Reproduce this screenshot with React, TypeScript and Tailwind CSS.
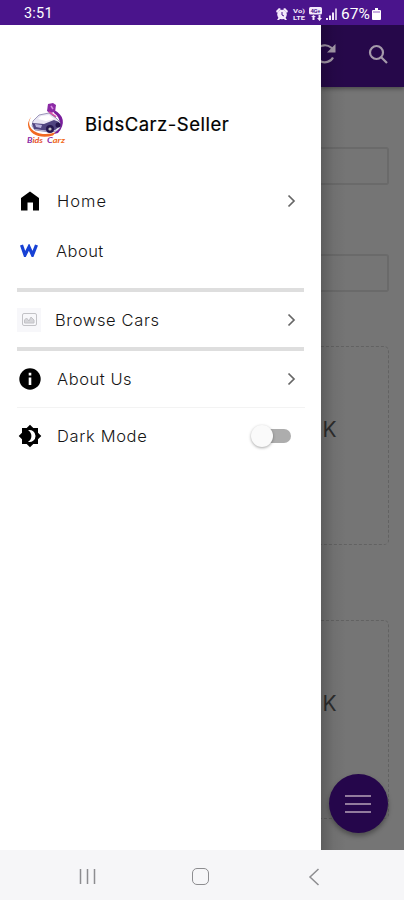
import React from "react";

const label = "font-[Inter,'Open_Sans',sans-serif] font-light text-[#151515] whitespace-nowrap leading-6 text-[16.5px]";

function Chevron() {
  return (
    <svg className="ml-auto mr-[8px] shrink-0" width="10" height="14" viewBox="0 0 10 14" fill="none" stroke="#666" strokeWidth="1.7">
      <path d="M1.5 1.5 7 7l-5.5 5.5" />
    </svg>
  );
}

function Logo() {
  return (
    <svg width="42" height="44" viewBox="0 0 42 44" className="shrink-0">
      <path d="M6 14C0 21 4 29 14 31.500q9 1.500 16-1.500l-3 3.500C15 37 3 33 2 23q0-5 4-9Z" fill="#f26a21" />
      <path d="M28 8c10 5 12 14 4 23l-4 1c7-8 8-15 0-21Z" fill="#7a1d9c" />
      <path d="M22 2l5-1 3 2-1 7-5 1-3-2Z" fill="#8b2aa5" />
      <path d="m25 4 2 3" stroke="#d78be0" strokeWidth="1.500" />
      <path d="m23 10 7 5" stroke="#dd4ba5" strokeWidth="2" />
      <path d="m7 19 6-6 10-2 7 5 4 4v6l-3 3-8 1-14-2-3-4Z" fill="#e9e6f3" stroke="#77719f" strokeWidth=".7" />
      <path d="m12 17 3-3 8-1 5 4-8 2Z" fill="#fff" />
      <path d="m6 21 12 1 10-4 5 2v5l-4 3-6 1-15-2Z" fill="#504580" />
      <path d="m9 22 7 1-1 3-5-1Z" fill="#b9b2dc" />
      <circle cx="24" cy="27" r="4" fill="#24164e" />
      <circle cx="24" cy="27" r="1.6" fill="#bbb" />
      <circle cx="32" cy="23" r="2.5" fill="#24164e" />
      <text x="1" y="41" textLength="16" lengthAdjust="spacingAndGlyphs" fontFamily="Lato" fontSize="8" fontWeight="700" fontStyle="italic" fill="#e8552c"><tspan fill="#8b2aa5">B</tspan>ids</text>
      <text x="21" y="41" textLength="18" lengthAdjust="spacingAndGlyphs" fontFamily="Lato" fontSize="8" fontWeight="700" fontStyle="italic" fill="#f26a21"><tspan fill="#8b2aa5">C</tspan>arz</text>
    </svg>
  );
}

function StatusBar() {
  return (
    <header className="flex h-[24.5px] shrink-0 items-center bg-[#4a148c] pl-6 pr-[22px] pt-[3px] font-[Roboto,sans-serif] text-white">
      <span className="w-[30px] text-[14.5px] leading-5 tracking-[0.2px]">3:51</span>
      <svg className="ml-auto mr-[3px]" width="62" height="16" viewBox="0 0 62 16">
        <g fill="#f4e9fb">
          <circle cx="6" cy="8.5" r="4.8" />
          <path d="m0 5 3-3 2 1-4 4ZM12 5 9 2 7 3l4 4ZM1 14l2-3 2 1-2 2ZM11 14l-2-3-2 1 2 2Z" />
          <text x="17" y="7" fontFamily="Roboto" fontSize="5.8" fontWeight="700" textLength="12" lengthAdjust="spacingAndGlyphs">Vo)</text>
          <text x="17" y="14.2" fontFamily="Roboto" fontSize="5.8" fontWeight="700" textLength="12" lengthAdjust="spacingAndGlyphs">LTE</text>
          <rect x="33" y="1" width="13" height="7.5" rx="1.5" />
          <path d="m35 11 2.5-2 2.5 2h-1.500v3h-2v-3ZM41 12h1.500V9h2v3H46l-2.500 3Z" />
          <path d="M50 12h2v2h-2ZM53 9.500h2V14h-2ZM56 6.500h2V14h-2Z" />
          <path d="M59 2.500h2V14h-2Z" opacity=".75" />
        </g>
        <path d="M6 6v3l2 1" fill="none" stroke="#4a148c" />
        <text x="34.5" y="7" fontFamily="Roboto" fontSize="6" fontWeight="700" textLength="10" fill="#4a148c">4G+</text>
      </svg>
      <span className="text-[15.5px] leading-5 tracking-[0.1px]">67%</span>
      <svg className="ml-[2px] mr-px" width="9" height="12" viewBox="0 0 9 12"><path d="M3 0h3v2h2q1 0 1 1v8q0 1-1 1H1q-1 0-1-1V3q0-1 1-1h2Z" fill="#fff" /><path d="M1 3h7v2H1Z" fill="#c8aee0" /></svg>
    </header>
  );
}

function Drawer() {
  return (
    <aside className="flex w-[320.5px] shrink-0 flex-col bg-white pl-[17px] pr-4">
      <div className="mt-[76px] flex h-[46px] items-center pl-[9px]">
        <Logo />
        <h1 className="ml-[17px] whitespace-nowrap font-[Inter,'Open_Sans',sans-serif] text-[18.5px] font-normal leading-6 tracking-[0.5px] text-black [-webkit-text-stroke:0.2px_black]">BidsCarz-Seller</h1>
      </div>
      <nav className="flex flex-col">
        <a className="mt-[29px] flex h-[50px] items-center">
          <svg width="24" height="24" viewBox="0 0 24 24" className="ml-px"><path d="M3 9 12 2.500 21 9v12.500h-6v-8H9.500v8H3Z" fill="#000" /></svg>
          <span className={`${label} ml-[15px] tracking-[1px]`}>Home</span>
          <Chevron />
        </a>
        <a className="flex h-[50px] items-center">
          <svg width="18" height="13" viewBox="0 0 18 13" className="ml-[3px]"><path d="M1.5 1 5 11 9 3l3.500 8L16.500 1" fill="none" stroke="#1741d5" strokeWidth="3.200" /></svg>
          <span className={`${label} ml-[18px] tracking-[0.45px]`}>About</span>
        </a>
        <hr className="mt-[12px] h-[4px] w-[287px] border-0 bg-[#dedede]" />
        <a className="flex h-[55px] items-center pt-px">
          <span className="flex size-[24px] items-center justify-center bg-[#f7f7fa]">
            <svg width="15" height="13" viewBox="0 0 15 13" fill="none" stroke="#c2c2c6"><rect x=".5" y=".5" width="14" height="12" rx="1.5" /><path d="M2.5 10V7l2-2 2.5 3 2-4 3 3v3Z" fill="#d5d5d9" /></svg>
          </span>
          <span className={`${label} ml-[14px] tracking-[0.65px]`}>Browse Cars</span>
          <Chevron />
        </a>
        <hr className="h-[4px] w-[287px] border-0 bg-[#dedede]" />
        <a className="flex h-[57px] items-center border-b border-[#f3f3f3]">
          <svg width="24" height="24" viewBox="0 0 24 24" className="ml-px"><circle cx="12" cy="12" r="10.7" /><path d="M10.700 5.800h2.600v2.700h-2.600ZM10.700 10.500h2.600V18h-2.600Z" fill="#fff" /></svg>
          <span className={`${label} ml-[15px] tracking-[0.55px]`}>About Us</span>
          <Chevron />
        </a>
        <div className="flex h-[56px] items-center">
          <svg width="24" height="24" viewBox="0 0 24 24" className="ml-px"><path d="M20 8.700V4h-4.700L12 .700 8.700 4H4v4.700L.700 12 4 15.300V20h4.700l3.300 3.300 3.300-3.300H20v-4.700l3.300-3.300Z" /><path d="M10 6.200a6 6 0 1 1 0 11.600c2.200-1.300 3.400-3.200 3.400-5.800S12.200 7.500 10 6.200Z" fill="#fff" /></svg>
          <span className={`${label} ml-[15px] tracking-[0.65px]`}>Dark Mode</span>
          <span className="ml-auto mr-[14px] flex h-[14px] w-[36px] items-center rounded-full bg-[#adadad]">
            <span className="-ml-[4px] size-[22px] shrink-0 rounded-full bg-[#fafafa] shadow-[0_1px_3px_rgba(0,0,0,0.35)]" />
          </span>
        </div>
      </nav>
    </aside>
  );
}

function DimmedPage() {
  return (
    <main className="relative flex min-w-0 grow flex-col overflow-hidden bg-[#757575]">
      <div className="z-10 flex h-[62.500px] shrink-0 items-center justify-between bg-[#26084a] pr-[15px] pb-[3px] shadow-[0_2px_4px_rgba(0,0,0,0.35)]">
        <svg width="16" height="22" viewBox="8 1 16 22" fill="none" stroke="#a59aaa" strokeWidth="2.2"><path d="M20 15.500a9 8.500 0 1 1-2-10l3 2.500" /><path d="M22.500 2v8.500H14Z" fill="#a59aaa" stroke="none" /></svg>
        <svg width="21" height="21" viewBox="0 0 21 21" fill="none" stroke="#a59aaa" strokeWidth="2.2"><circle cx="8.500" cy="8.500" r="6.500" /><path d="m13 13 6 6" /></svg>
      </div>
      <div className="mt-[60px] h-[38px] w-[68px] shrink-0 rounded-r-[3px] border-2 border-l-0 border-[#6a6a6a]" />
      <div className="mt-[69px] h-[38px] w-[68px] shrink-0 rounded-r-[3px] border-2 border-l-0 border-[#6a6a6a]" />
      <div className="mt-[54px] flex h-[199px] w-[68px] shrink-0 items-start rounded-r-[5px] border border-l-0 border-dashed border-[#626262] pl-[2px] pt-[71px] font-[Inter,sans-serif] text-[21px] leading-6 text-[#2d2d2d]">K</div>
      <div className="mt-[75px] flex h-[199px] w-[68px] shrink-0 items-start rounded-r-[5px] border border-l-0 border-dashed border-[#626262] pl-[2px] pt-[71px] font-[Inter,sans-serif] text-[21px] leading-6 text-[#2d2d2d]">K</div>
      <div className="pointer-events-none absolute inset-0 z-20 bg-linear-to-r from-black/20 via-black/5 via-15% to-transparent to-30%" />
      <button className="absolute bottom-[17px] right-[16px] z-30 flex size-[59px] flex-col items-center justify-center gap-[6px] rounded-full bg-[#25064b] pr-[2px] shadow-[0_3px_5px_rgba(0,0,0,0.35)]">
        <span className="h-[2px] w-[26px] bg-[#927b9d]" />
        <span className="h-[2px] w-[26px] bg-[#927b9d]" />
        <span className="h-[2px] w-[26px] bg-[#927b9d]" />
      </button>
    </main>
  );
}

export default function App() {
  return (
    <div className="flex h-[900px] w-[404px] flex-col overflow-hidden bg-white">
      <StatusBar />
      <div className="flex min-h-0 grow">
        <Drawer />
        <DimmedPage />
      </div>
      <footer className="flex h-[50px] shrink-0 items-center bg-[#f6f6f8] pl-[79px] pt-[3px]">
        <svg width="17" height="17" viewBox="0 0 17 17" stroke="#8d8d90" strokeWidth="1.5"><path d="M1.500 1v15M8.500 1v15M15.500 1v15" /></svg>
        <span className="ml-[96px] size-[17px] rounded-[5px] border-[1.5px] border-[#8d8d90]" />
        <svg className="ml-[99px]" width="12" height="18" viewBox="0 0 12 18" fill="none" stroke="#8d8d90" strokeWidth="1.5"><path d="M10.500 1 2 9l8.500 8" /></svg>
      </footer>
    </div>
  );
}
